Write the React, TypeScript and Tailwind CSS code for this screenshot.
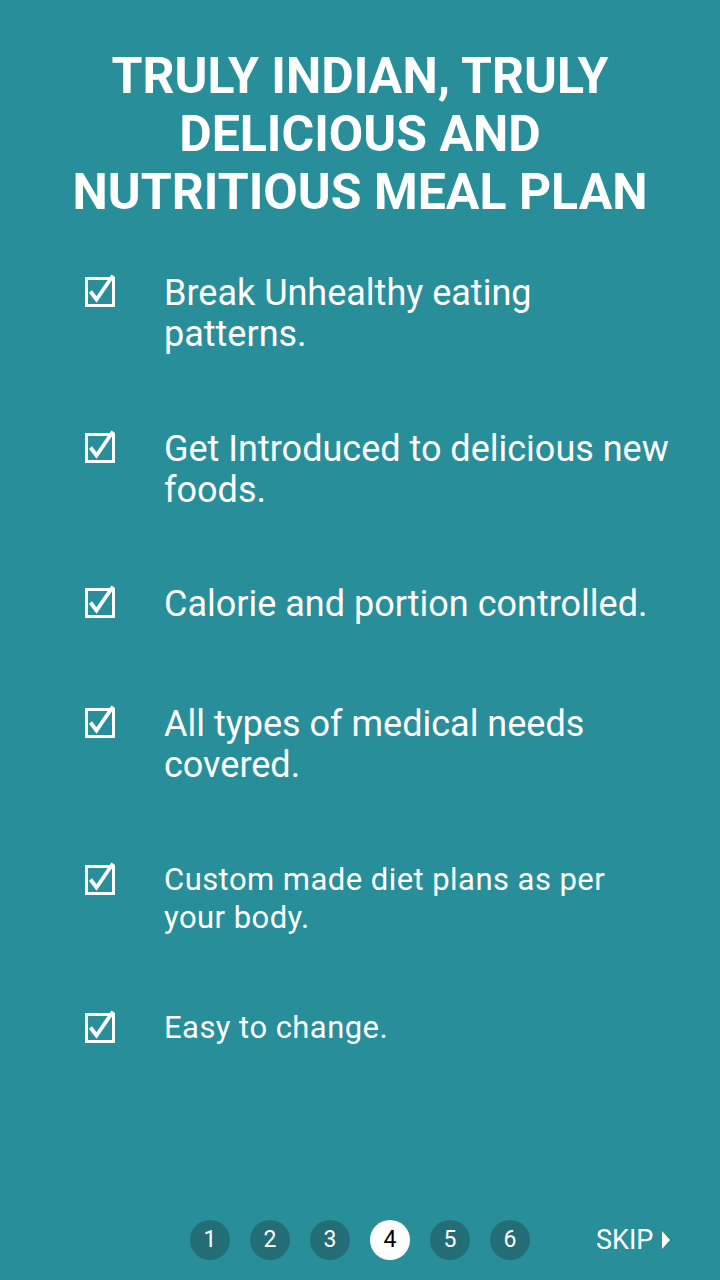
import React from 'react';

const items = [
  { text: 'Break Unhealthy eating patterns.', small: false, mt: '' },
  { text: 'Get Introduced to delicious new foods.', small: false, mt: 'mt-[74px]' },
  { text: 'Calorie and portion controlled.', small: false, mt: 'mt-[73px]' },
  { text: 'All types of medical needs covered.', small: false, mt: 'mt-[79px]' },
  { text: 'Custom made diet plans as per your body.', small: true, mt: 'mt-[75px]' },
  { text: 'Easy to change.', small: true, mt: 'mt-[72px]' },
];

const CheckBox = () => (
  <svg width="32" height="34" viewBox="0 0 32 34" className="shrink-0">
    <rect x="2.5" y="4.5" width="27" height="27" fill="none" stroke="white" strokeWidth="3" />
    <path d="M6.5 17.5 L12.5 25.5 L29 1.5" fill="none" stroke="white" strokeWidth="3.8" strokeLinejoin="miter" />
  </svg>
);

export default function App() {
  return (
    <div
      className="w-[720px] h-[1280px] bg-[#288f9a] text-white flex flex-col"
      style={{ fontFamily: 'Roboto, "Noto Sans", sans-serif' }}
    >
      <h1 className="mt-[47px] px-8 text-center font-bold text-[50px] leading-[58px]">
        TRULY INDIAN, TRULY
        <br />
        DELICIOUS AND
        <br />
        NUTRITIOUS MEAL PLAN
      </h1>

      <ul className="mt-[52px] pl-[84px] flex flex-col">
        {items.map((item, i) => (
          <li key={i} className={`flex ${item.mt}`}>
            <div className="pt-[1px]">
              <CheckBox />
            </div>
            <p
              className={`ml-[48px] ${
                item.small
                  ? 'w-[480px] text-[31px] leading-[38px] tracking-[0.45px]'
                  : 'w-[510px] text-[36px] leading-[41px]'
              }`}
            >
              {item.text}
            </p>
          </li>
        ))}
      </ul>

      <div className="mt-auto mb-[20px] h-[40px] flex items-center">
        <div className="ml-[190px] flex gap-[20px]">
          {[1, 2, 3, 4, 5, 6].map((n) => (
            <div
              key={n}
              className={`w-[40px] h-[40px] rounded-full flex items-center justify-center text-[23px] ${
                n === 4 ? 'bg-white text-black' : 'bg-[#236d77] text-white'
              }`}
            >
              {n}
            </div>
          ))}
        </div>
        <div className="ml-[66px] flex items-center gap-[8px] text-[27px]">
          <span>SKIP</span>
          <svg width="10" height="18" viewBox="0 0 10 18">
            <path d="M1 0 L9 9 L1 18 Z" fill="white" />
          </svg>
        </div>
      </div>
    </div>
  );
}
